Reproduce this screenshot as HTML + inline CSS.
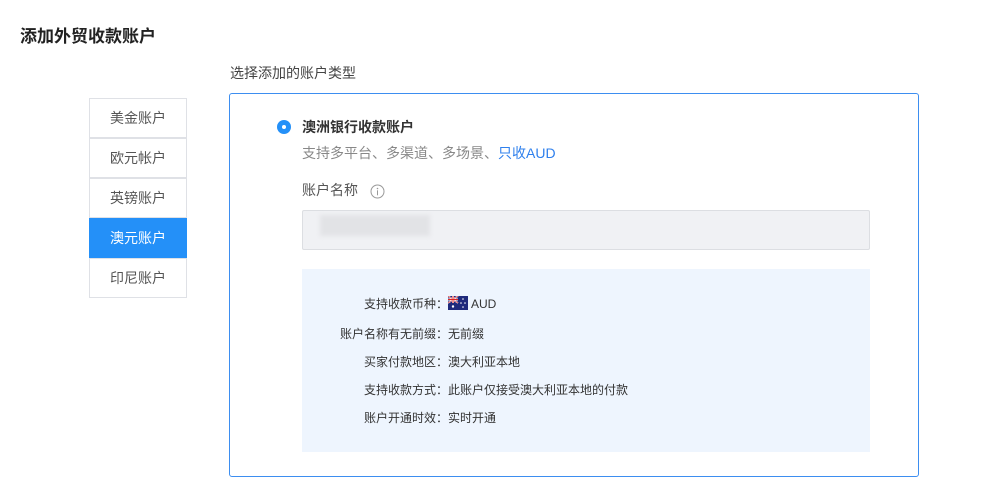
<!DOCTYPE html>
<html><head><meta charset="utf-8">
<style>
*{margin:0;padding:0;box-sizing:border-box}
body{width:987px;height:491px;background:#fff;font-family:"Liberation Sans","Noto Sans CJK SC",sans-serif;position:relative;overflow:hidden;color:#333}
.abs{position:absolute;white-space:nowrap}
.title{left:20px;top:26px;font-size:17px;font-weight:bold;color:#222;line-height:22px}
.sub{left:230px;top:64px;font-size:14px;color:#444;line-height:18px}
.tab{position:absolute;left:89px;width:98px;height:40px;border:1px solid #dfe1e6;background:#fff;font-size:14px;color:#555;text-align:center;line-height:38px}
.tab.on{background:#2490f8;border-color:#2490f8;color:#fff}
.box{left:229px;top:93px;width:690px;height:384px;border:1px solid #3d8ef0;border-radius:3px}
.radio{left:277px;top:120px;width:14px;height:14px;border-radius:50%;background:#2490f8}
.radio:after{content:"";position:absolute;left:5px;top:5px;width:4px;height:4px;border-radius:50%;background:#fff}
.input{left:302px;top:210px;width:568px;height:40px;background:#f0f1f4;border:1px solid #dcdee2;border-radius:2px}
.blur{left:320px;top:215px;width:110px;height:21px;background:#e2e3e6;filter:blur(2px)}
.panel{left:302px;top:269px;width:568px;height:183px;background:#eef5fe}
.row{position:absolute;left:302px;font-size:12px;line-height:16px;color:#333}
.row .l{display:inline-block;width:146px;text-align:right}
</style></head><body>
<div class="abs title">添加外贸收款账户</div>
<div class="abs sub">选择添加的账户类型</div>
<div class="tab" style="top:98px">美金账户</div>
<div class="tab" style="top:138px">欧元帐户</div>
<div class="tab" style="top:178px">英镑账户</div>
<div class="tab on" style="top:218px">澳元账户</div>
<div class="tab" style="top:258px">印尼账户</div>
<div class="abs box"></div>
<div class="abs radio"></div>
<div class="abs" style="left:302px;top:118px;font-size:14px;font-weight:bold;color:#333;line-height:18px">澳洲银行收款账户</div>
<div class="abs" style="left:302px;top:144px;font-size:14px;color:#888;line-height:18px">支持多平台、多渠道、多场景、<span style="color:#2f80ed">只收AUD</span></div>
<div class="abs" style="left:302px;top:181px;font-size:14px;color:#555;line-height:18px">账户名称</div>
<svg class="abs" style="left:370px;top:184px" width="15" height="15" viewBox="0 0 15 15"><circle cx="7.5" cy="7.5" r="6.5" fill="none" stroke="#999" stroke-width="1"/><circle cx="7.5" cy="4.5" r="0.8" fill="#999"/><rect x="7" y="6.3" width="1" height="5" fill="#999"/></svg>
<div class="abs input"></div>
<div class="abs blur"></div>
<div class="abs panel"></div>
<div class="row" style="top:296px"><span class="l">支持收款币种：</span><svg width="20" height="14" viewBox="0 0 20 14" style="vertical-align:-2px;margin-right:3px"><rect width="20" height="14" fill="#1f2a7c"/><path d="M0 0L10 7M10 0L0 7" stroke="#fff" stroke-width="1.6"/><path d="M0 0L10 7M10 0L0 7" stroke="#d22" stroke-width="0.6"/><path d="M5 0V7M0 3.5H10" stroke="#fff" stroke-width="2"/><path d="M5 0V7M0 3.5H10" stroke="#d22" stroke-width="1"/><circle cx="5" cy="10.5" r="1.2" fill="#fff"/><circle cx="15" cy="3" r="0.8" fill="#fff"/><circle cx="13" cy="7" r="0.8" fill="#fff"/><circle cx="17" cy="7" r="0.8" fill="#fff"/><circle cx="15" cy="11" r="0.8" fill="#fff"/></svg>AUD</div>
<div class="row" style="top:326px"><span class="l">账户名称有无前缀：</span>无前缀</div>
<div class="row" style="top:354px"><span class="l">买家付款地区：</span>澳大利亚本地</div>
<div class="row" style="top:382px"><span class="l">支持收款方式：</span>此账户仅接受澳大利亚本地的付款</div>
<div class="row" style="top:410px"><span class="l">账户开通时效：</span>实时开通</div>
</body></html>
